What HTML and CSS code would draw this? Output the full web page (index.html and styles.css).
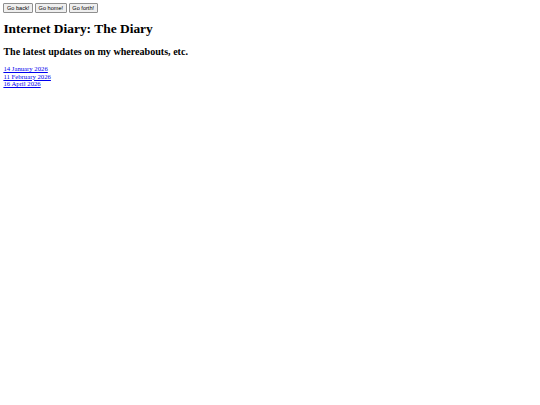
FILE: index.html
```html
<!DOCTYPE html>
<html>
<head>
<meta charset="utf-8">
<title>Internet Diary: The Diary</title>
<link rel="stylesheet" href="styles.css">
</head>
<body class="page">
<div class="nav">
<button class="nav-btn" type="button">Go back!</button>
<button class="nav-btn" type="button">Go home!</button>
<button class="nav-btn" type="button">Go forth!</button>
</div>
<h1 class="title">Internet Diary: The Diary</h1>
<h2 class="subtitle">The latest updates on my whereabouts, etc.</h2>
<div class="entries">
<a class="entry" href="#">14 January 2026</a><br>
<a class="entry" href="#">11 February 2026</a><br>
<a class="entry" href="#">16 April 2026</a>
</div>
</body>
</html>
```
FILE: styles.css
```css
html, body { background: #fff; }
.page {
  margin: 3.4px;
  font-family: "Liberation Serif", "Times New Roman", serif;
  font-size: 6.72px;
  color: #000;
}
.nav { display: flex; gap: 2px; }
.nav-btn {
  font-family: "Liberation Sans", Arial, sans-serif;
  font-size: 5.6px;
  line-height: 6.4px;
  padding: 0.6px 2.6px;
  margin: 0;
  border: 1px solid #8f8f8f;
  border-radius: 1px;
  background: #efefef;
  color: #000;
}
.title {
  font-size: 13.44px;
  font-weight: bold;
  margin: 8.5px 0;
}
.subtitle {
  font-size: 10.08px;
  font-weight: bold;
  margin: 8.3px 0;
}
.entries { line-height: 7.6px; }
.entry { color: #0000ee; text-decoration: underline; }
```
